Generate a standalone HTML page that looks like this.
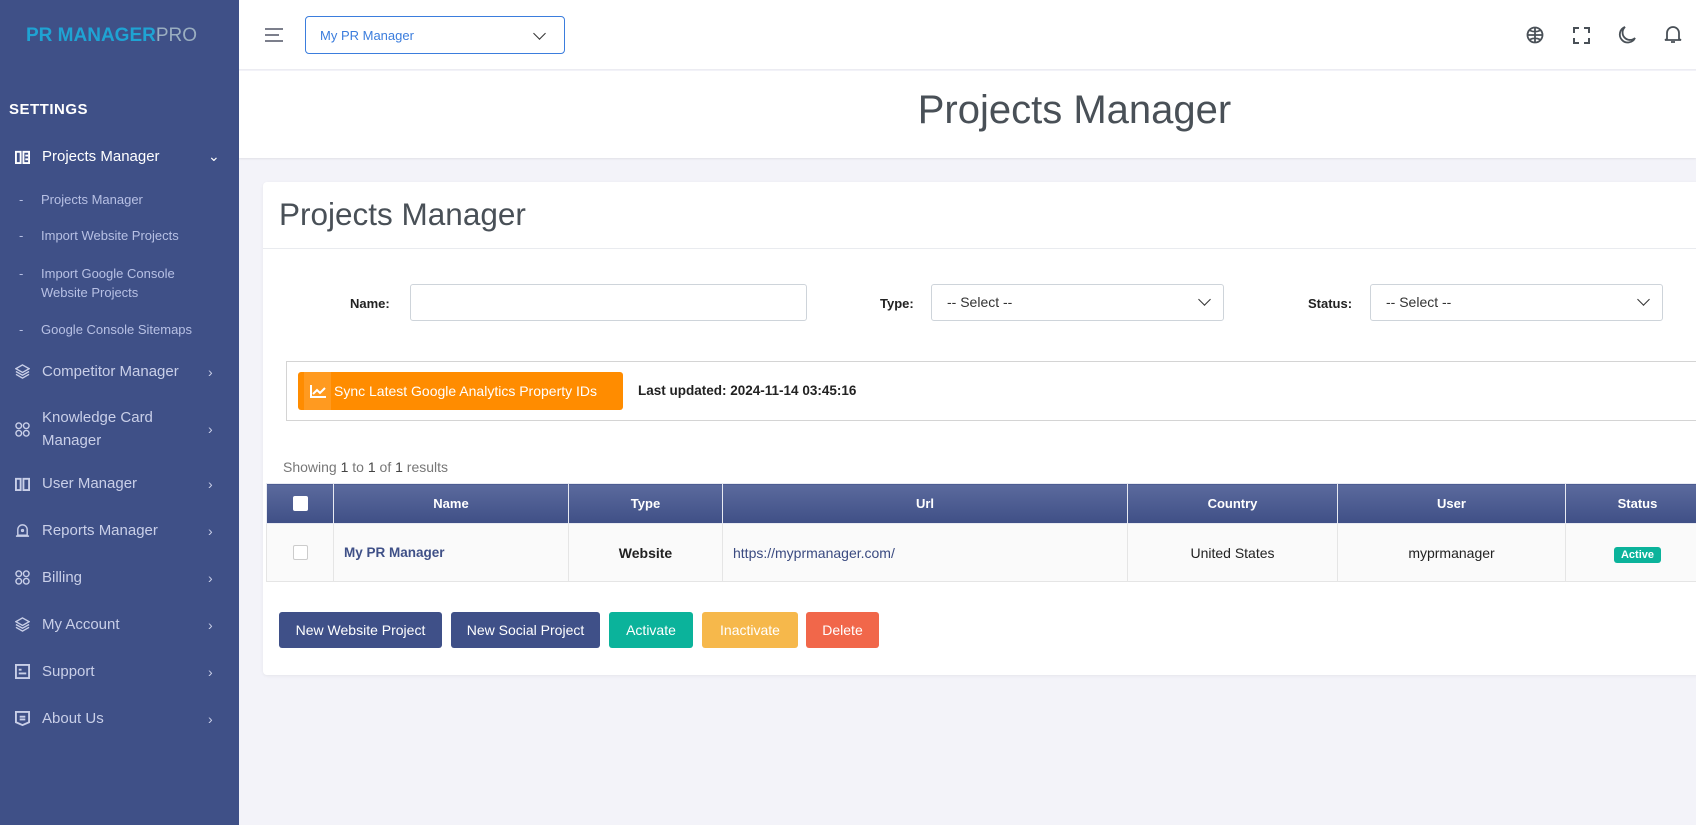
<!DOCTYPE html>
<html><head><meta charset="utf-8"><style>
*{box-sizing:border-box;margin:0;padding:0}
body{width:1696px;height:825px;overflow:hidden;background:#f3f3f9;font-family:"Liberation Sans",sans-serif;position:relative}
.abs{position:absolute}
#side{left:0;top:0;width:239px;height:825px;background:#3f5087;color:#c7cde6}
.logo{left:26px;top:25px;font-size:19px;font-weight:bold;color:#1fa3d3;letter-spacing:0}
.logo span{color:#9aaec0;font-weight:normal}
.set{left:9px;top:101px;color:#fff;font-weight:bold;font-size:15px;letter-spacing:.5px}
.it{left:15px;font-size:15px;color:#c9cfe8;display:flex;align-items:center;width:210px}
.it svg{width:15px;height:15px;margin-right:12px;flex:none}
.it .ch{position:absolute;left:193px;font-size:14px}
.sub{left:19px;font-size:13px;color:#b7c0e4;line-height:19px}
.sub b{position:absolute;left:0;font-weight:normal}
.sub span{position:absolute;left:22px;width:180px}
#top{left:239px;top:0;right:0;height:70px;background:#fff;border-bottom:1px solid #ececf2}
#tb{left:239px;top:71px;right:0;height:87px;background:#fff;box-shadow:0 1px 2px rgba(0,0,0,.08)}
.card{left:263px;top:182px;width:1450px;height:493px;background:#fff;border-radius:4px;box-shadow:0 1px 3px rgba(0,0,0,.06)}
.inp{border:1px solid #ced4da;border-radius:3px;height:37px;background:#fff;font-size:14px;color:#333;padding:9px 15px}
.lbl{font-size:13px;font-weight:bold;color:#222;top:296px}
th,td{border:1px solid #e5e5e5}
table{border-collapse:collapse;position:absolute;left:266px;top:483px;width:1444px;font-size:14px}
th{height:40px;color:#fff;font-weight:bold;font-size:13px;background:linear-gradient(#5b6a9d,#3f4f86);border-color:#e8eaf2}
td{height:58px;background:#fafafa;text-align:center;color:#222}
.btn{top:612px;height:36px;border-radius:3px;color:#fff;font-size:14px;display:flex;align-items:center;justify-content:center}
.dd{position:absolute;right:14px;top:10px;width:9px;height:9px;border-right:1.8px solid #333;border-bottom:1.8px solid #333;transform:rotate(45deg)}
</style></head><body>
<div id="side" class="abs">
<div class="abs logo">PR MANAGER<span>PRO</span></div>
<div class="abs set">SETTINGS</div>
<div class="abs it" style="top:148px;color:#fff"><svg viewBox="0 0 16 16" fill="none" stroke="#fff" stroke-width="2"><rect x="1" y="3" width="5" height="12"/><rect x="9" y="3" width="6" height="12"/><path d="M11 7h3M11 11h3"/></svg>Projects Manager<span class="ch">⌄</span></div>
<div class="abs sub" style="top:190px"><b>-</b><span>Projects Manager</span></div>
<div class="abs sub" style="top:226px"><b>-</b><span>Import Website Projects</span></div>
<div class="abs sub" style="top:264px"><b>-</b><span>Import Google Console Website Projects</span></div>
<div class="abs sub" style="top:320px"><b>-</b><span>Google Console Sitemaps</span></div>
<div class="abs it" style="top:363px"><svg viewBox="0 0 16 16" fill="none" stroke="#c9cfe8" stroke-width="1.5"><path d="M8 1l7 4-7 4-7-4zM1 8l7 4 7-4M1 11l7 4 7-4"/></svg>Competitor Manager<span class="ch">›</span></div>
<div class="abs it" style="top:406px;line-height:23px"><svg viewBox="0 0 16 16" fill="none" stroke="#c9cfe8" stroke-width="1.5"><circle cx="4" cy="4" r="3"/><circle cx="12" cy="4" r="3"/><circle cx="4" cy="12" r="3"/><circle cx="12" cy="12" r="3"/></svg>Knowledge Card<br>Manager<span class="ch">›</span></div>
<div class="abs it" style="top:475px"><svg viewBox="0 0 16 16" fill="none" stroke="#c9cfe8" stroke-width="2"><rect x="1" y="3" width="5" height="12"/><rect x="9" y="3" width="6" height="12"/></svg>User Manager<span class="ch">›</span></div>
<div class="abs it" style="top:522px"><svg viewBox="0 0 16 16" fill="none" stroke="#c9cfe8" stroke-width="1.5"><path d="M3 13V7a5 5 0 0110 0v6zM1 14h14"/><circle cx="8" cy="8" r="1"/></svg>Reports Manager<span class="ch">›</span></div>
<div class="abs it" style="top:569px"><svg viewBox="0 0 16 16" fill="none" stroke="#c9cfe8" stroke-width="1.5"><circle cx="4" cy="4" r="3"/><circle cx="12" cy="4" r="3"/><circle cx="4" cy="12" r="3"/><circle cx="12" cy="12" r="3"/></svg>Billing<span class="ch">›</span></div>
<div class="abs it" style="top:616px"><svg viewBox="0 0 16 16" fill="none" stroke="#c9cfe8" stroke-width="1.5"><path d="M8 1l7 4-7 4-7-4zM1 8l7 4 7-4M1 11l7 4 7-4"/></svg>My Account<span class="ch">›</span></div>
<div class="abs it" style="top:663px"><svg viewBox="0 0 16 16" fill="none" stroke="#c9cfe8" stroke-width="2"><rect x="1" y="1" width="14" height="14"/><path d="M4 6h3M4 10h8"/></svg>Support<span class="ch">›</span></div>
<div class="abs it" style="top:710px"><svg viewBox="0 0 16 16" fill="none" stroke="#c9cfe8" stroke-width="2"><path d="M1 1h14v11l-7 3-7-3z"/><path d="M5 6h6M5 9h6"/></svg>About Us<span class="ch">›</span></div>
</div>
<div id="top" class="abs"></div>
<svg class="abs" style="left:264px;top:27px" width="20" height="16"><path d="M1 2h18M1 8h14M1 14h18" stroke="#7c7f8c" stroke-width="2"/></svg>
<div class="abs" style="left:305px;top:16px;width:260px;height:38px;border:1px solid #3b7ddd;border-radius:4px;color:#3b7ddd;font-size:13px;padding:11px 14px">My PR Manager<span class="dd" style="right:20px;top:12px"></span></div>
<svg class="abs" style="left:1526px;top:26px" width="18" height="18" fill="none" stroke="#495057" stroke-width="1.8"><circle cx="9" cy="9" r="7.5"/><path d="M1.5 9h15M9 1.5v15M4 4.5c3 1.5 7 1.5 10 0M4 13.5c3-1.5 7-1.5 10 0"/></svg>
<svg class="abs" style="left:1573px;top:27px" width="17" height="17" fill="none" stroke="#495057" stroke-width="2"><path d="M1 6V1h5M11 1h5v5M16 11v5h-5M6 16H1v-5"/></svg>
<svg class="abs" style="left:1618px;top:25px" width="19" height="19" fill="none" stroke="#495057" stroke-width="1.8"><path d="M7 2a8 8 0 1010 11A7 7 0 017 2z"/></svg>
<svg class="abs" style="left:1664px;top:25px" width="18" height="19" fill="none" stroke="#495057" stroke-width="1.8"><path d="M3 14V8a6 6 0 0112 0v6l2 1H1zM7 17h4"/></svg>
<div id="tb" class="abs"></div>
<div class="abs" style="left:239px;right:0;top:88px;text-align:center;padding-left:214px;font-size:40px;color:#495057">Projects Manager</div>
<div class="abs card"></div>
<div class="abs" style="left:279px;top:196px;font-size:31.5px;color:#495057">Projects Manager</div>
<div class="abs" style="left:263px;top:248px;width:1433px;border-top:1px solid #e9ebef"></div>
<div class="abs lbl" style="left:350px">Name:</div>
<div class="abs inp" style="left:410px;top:284px;width:397px"></div>
<div class="abs lbl" style="left:880px">Type:</div>
<div class="abs inp" style="left:931px;top:284px;width:293px">-- Select --<span class="dd"></span></div>
<div class="abs lbl" style="left:1308px">Status:</div>
<div class="abs inp" style="left:1370px;top:284px;width:293px">-- Select --<span class="dd"></span></div>
<div class="abs" style="left:286px;top:361px;width:1420px;height:60px;border:1px solid #d4d4d4"></div>
<div class="abs" style="left:298px;top:372px;width:325px;height:38px;background:#ff8c00;border-radius:3px;color:#fff;font-size:14px;display:flex;align-items:center"><div style="width:27px;height:38px;background:#ff9a20;margin-left:6px;display:flex;align-items:center;justify-content:center"><svg width="16" height="13" fill="none" stroke="#fff" stroke-width="2"><path d="M1 0v12h15M3 9l4-4 3 3 5-5"/></svg></div><span style="margin-left:3px">Sync Latest Google Analytics Property IDs</span></div>
<div class="abs" style="left:638px;top:383px;font-size:13.5px;font-weight:bold;color:#222">Last updated: 2024-11-14 03:45:16</div>
<div class="abs" style="left:283px;top:459px;font-size:14px;color:#777">Showing <span style="color:#444">1</span> to <span style="color:#444">1</span> of <span style="color:#444">1</span> results</div>
<table><tr><th style="width:67px"><div style="width:15px;height:15px;background:#fff;border-radius:2px;margin:auto"></div></th><th style="width:235px">Name</th><th style="width:154px">Type</th><th style="width:405px">Url</th><th style="width:210px">Country</th><th style="width:228px">User</th><th>Status</th></tr>
<tr><td><div style="width:15px;height:15px;border:1px solid #ccc;border-radius:2px;margin:auto;background:#fff"></div></td><td style="text-align:left;padding-left:10px;font-weight:bold;color:#3f5087;font-size:13.5px">My PR Manager</td><td style="font-weight:bold">Website</td><td style="text-align:left;padding-left:10px;color:#3a4a80">https://myprmanager.com/</td><td>United States</td><td>myprmanager</td><td><span style="background:#0bb39b;color:#fff;font-size:11px;font-weight:bold;padding:2px 7px;border-radius:3px">Active</span></td></tr></table>
<div class="abs btn" style="left:279px;width:163px;background:#3f5088">New Website Project</div>
<div class="abs btn" style="left:451px;width:149px;background:#3f5088">New Social Project</div>
<div class="abs btn" style="left:609px;width:84px;background:#0bb39b">Activate</div>
<div class="abs btn" style="left:702px;width:96px;background:#f6b84b">Inactivate</div>
<div class="abs btn" style="left:806px;width:73px;background:#f1674a">Delete</div>
</body></html>
